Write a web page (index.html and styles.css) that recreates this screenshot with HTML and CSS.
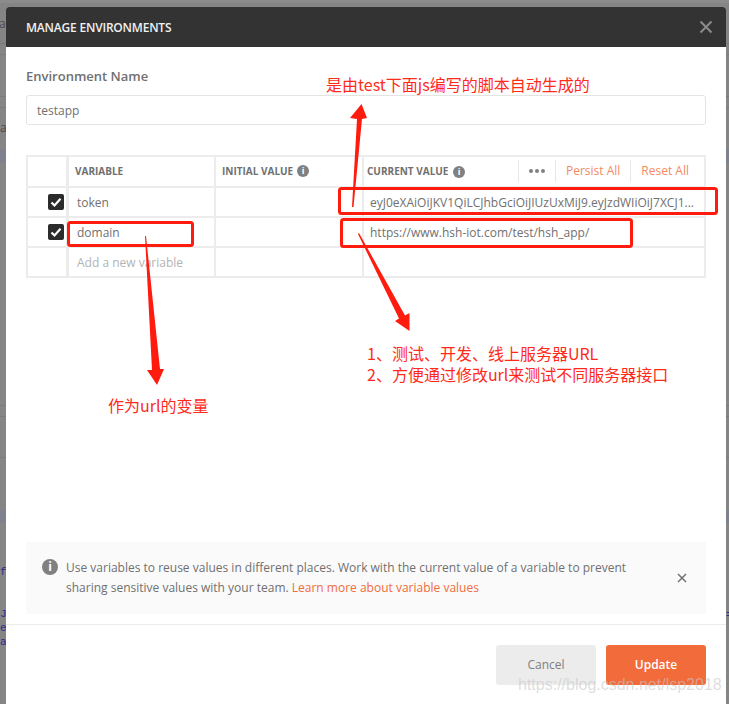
FILE: index.html
```html
<!DOCTYPE html>
<html lang="en">
<head>
  <meta charset="UTF-8">
  <title>Manage Environments</title>
  <link rel="stylesheet" href="styles.css">
</head>
<body>

  <!-- dimmed app behind the dialog -->
  <div class="backdrop">
    <span class="peek peek-as">as</span>
    <span class="peek peek-a">a</span>
    <span class="peek code code-f">f</span>
    <span class="peek code code-j">J</span>
    <span class="peek code code-e">e</span>
    <span class="peek code code-a">a</span>
    <span class="peek code code-eq">=</span>
  </div>

  <div class="modal">
    <div class="modal-header">
      <span class="modal-title">MANAGE ENVIRONMENTS</span>
      <svg class="modal-close" width="14" height="14" viewBox="0 0 14 14">
        <path d="M1.500 1.500L12.500 12.500M12.500 1.500L1.500 12.500" stroke="#8c8c8c" stroke-width="2" fill="none"/>
      </svg>
    </div>

    <div class="modal-body">
      <label class="field-label">Environment Name</label>
      <div class="name-input">testapp</div>

      <div class="var-table">
        <div class="var-row var-head">
          <div class="cell cell-check"></div>
          <div class="cell">VARIABLE</div>
          <div class="cell">INITIAL VALUE <span class="info-dot">i</span></div>
          <div class="cell cell-current">
            <span class="current-label">CURRENT VALUE <span class="info-dot">i</span></span>
            <div class="head-actions">
              <span class="action action-dots"><i></i><i></i><i></i></span>
              <span class="action">Persist All</span>
              <span class="action">Reset All</span>
            </div>
          </div>
        </div>

        <div class="var-row">
          <div class="cell cell-check"><span class="checkbox">
            <svg width="12" height="12" viewBox="0 0 12 12"><path d="M1.500 6.500L4.500 9.500L10.500 2.800" stroke="#fff" stroke-width="2.200" fill="none"/></svg>
          </span></div>
          <div class="cell">token</div>
          <div class="cell"></div>
          <div class="cell cell-value">eyJ0eXAiOiJKV1QiLCJhbGciOiJIUzUxMiJ9.eyJzdWIiOiJ7XCJ1...</div>
        </div>

        <div class="var-row">
          <div class="cell cell-check"><span class="checkbox">
            <svg width="12" height="12" viewBox="0 0 12 12"><path d="M1.500 6.500L4.500 9.500L10.500 2.800" stroke="#fff" stroke-width="2.200" fill="none"/></svg>
          </span></div>
          <div class="cell">domain</div>
          <div class="cell"></div>
          <div class="cell cell-value">https://www.hsh-iot.com/test/hsh_app/</div>
        </div>

        <div class="var-row">
          <div class="cell cell-check"></div>
          <div class="cell cell-placeholder">Add a new variable</div>
          <div class="cell"></div>
          <div class="cell"></div>
        </div>
      </div>

      <div class="notice">
        <span class="info-dot info-dot-big">i</span>
        <p class="notice-text">Use variables to reuse values in different places. Work with the current value of a variable to prevent sharing sensitive values with your team. <a class="notice-link">Learn more about variable values</a></p>
        <svg class="notice-close" width="10" height="10" viewBox="0 0 10 10">
          <path d="M1 1L9 9M9 1L1 9" stroke="#707070" stroke-width="1.500" fill="none"/>
        </svg>
      </div>
    </div>

    <div class="modal-footer">
      <button class="btn btn-cancel">Cancel</button>
      <button class="btn btn-update">Update</button>
    </div>
  </div>

  <!-- red annotations drawn on top of the screenshot -->
  <svg class="markup" width="729" height="704" viewBox="0 0 729 704">
    <g fill="none" stroke="#ff1c0f" stroke-width="3">
      <rect x="339.500" y="188.500" width="377" height="25" rx="2"/>
      <rect x="68.500" y="222.500" width="124" height="23" rx="2"/>
      <rect x="341.500" y="219.500" width="290" height="27" rx="2"/>
    </g>
    <g fill="#ff1c0f">
      <polygon points="352,207 357,119 350,118 361.500,104 367,118 362,119 353.500,207"/>
      <polygon points="145,236 152,370 147,370 157,385 164,369 160,369 146,236"/>
      <polygon points="358,234 399,318.500 395,321 409.500,331 409.500,313 405,315.500 359,233"/>
    </g>
  </svg>
  <span class="note note-top">是由test下面js编写的脚本自动生成的</span>
  <span class="note note-var">作为url的变量</span>
  <div class="note note-url">
    <div>1、测试、开发、线上服务器URL</div>
    <div>2、方便通过修改url来测试不同服务器接口</div>
  </div>

  <span class="watermark">https://blog.csdn.net/lsp2018</span>

</body>
</html>
```

FILE: styles.css
```css
html, body {
  margin: 0;
  height: 704px;
  overflow: hidden;
}

body {
  position: relative;
  font-family: "Open Sans", sans-serif;
  font-size: 12px;
  color: #707070;
  background-color: #858585;
}

/* backdrop */
.backdrop {
  position: absolute;
  top: 0;
  left: 0;
  width: 729px;
  height: 704px;
  background:
    linear-gradient(#8c8c8c, #8c8c8c) 0 0 / 100% 3px no-repeat,
    linear-gradient(#7b7b7b, #7b7b7b) 0 43px / 100% 1px no-repeat,
    linear-gradient(#7b7b7b, #7b7b7b) 0 54px / 100% 1px no-repeat,
    linear-gradient(#7b7b7b, #7b7b7b) 0 96px / 100% 1px no-repeat,
    linear-gradient(#7b7b7b, #7b7b7b) 0 107px / 100% 1px no-repeat,
    linear-gradient(#7d828c, #7d828c) 0 149px / 100% 14px no-repeat,
    linear-gradient(#7b7b7b, #7b7b7b) 0 405px / 100% 1px no-repeat,
    linear-gradient(#7b7b7b, #7b7b7b) 0 416px / 100% 1px no-repeat,
    linear-gradient(#7b7b7b, #7b7b7b) 0 457px / 100% 1px no-repeat,
    linear-gradient(#7d828c, #7d828c) 0 510px / 100% 13px no-repeat;
}

.peek {
  position: absolute;
  left: 0;
  font-size: 12px;
  line-height: 14px;
  color: #4a4a4a;
}

.peek-as { top: 17px; left: -1px; }
.peek-a { top: 121px; }

.code {
  font-family: "Liberation Mono", monospace;
  font-size: 11px;
  color: #2a2a8c;
}

.code-f { top: 565px; }
.code-j { top: 607px; }
.code-e { top: 621px; }
.code-a { top: 635px; }
.code-eq { top: 608px; left: 726px; }

/* dialog */
.modal {
  position: absolute;
  top: 7px;
  left: 6px;
  width: 720px;
  height: 697px;
  display: flex;
  flex-direction: column;
  background-color: #fff;
  border-radius: 3px 3px 0 0;
}

.modal-header {
  height: 40px;
  flex: none;
  display: flex;
  align-items: center;
  justify-content: space-between;
  padding: 0 13px 0 20px;
  background-color: #333;
  border-radius: 3px 3px 0 0;
}

.modal-title {
  font-size: 12px;
  font-weight: 600;
  letter-spacing: -0.2px;
  color: #f0f0f0;
}

.modal-body {
  flex: 1;
  display: flex;
  flex-direction: column;
  padding: 20px 20px 10px;
  border-bottom: 1px solid #ececec;
}

.field-label {
  font-size: 13px;
  font-weight: 600;
  line-height: 18px;
  color: #707070;
}

.name-input {
  height: 28px;
  margin-top: 10px;
  padding-left: 10px;
  line-height: 29px;
  border: 1px solid #e4e4e4;
  border-radius: 3px;
}

/* variables table */
.var-table {
  margin-top: 30px;
  border-top: 2px solid #ececec;
  border-left: 2px solid #ececec;
}

.var-row {
  display: grid;
  grid-template-columns: 41px 147px 148px 342px;
  height: 30px;
}

.var-head {
  height: 31px;
  font-size: 10px;
  font-weight: 700;
  color: #707070;
}

.cell {
  display: flex;
  align-items: center;
  box-sizing: border-box;
  height: 100%;
  min-width: 0;
  padding-left: 8px;
  border-right: 2px solid #ececec;
  border-bottom: 2px solid #ececec;
  white-space: nowrap;
}

.var-head .cell {
  padding-left: 6px;
  padding-bottom: 2px;
}

.var-row .cell-check {
  justify-content: flex-end;
  padding: 0 2px 0 0;
  border-right-width: 3px;
}

.var-head .cell-current {
  padding-left: 3px;
  justify-content: space-between;
}

.cell-value {
  padding-left: 6px;
}

.cell-placeholder {
  color: #b3b3b3;
}

.checkbox {
  width: 16px;
  height: 16px;
  display: flex;
  align-items: center;
  justify-content: center;
  background-color: #2b2b2b;
  border-radius: 2px;
}

.info-dot {
  display: inline-block;
  width: 12px;
  height: 12px;
  margin-left: 4px;
  font-size: 9px;
  font-weight: 700;
  line-height: 12px;
  text-align: center;
  color: #fff;
  background-color: #808080;
  border-radius: 50%;
}

.current-label .info-dot {
  margin-left: 2px;
}

.head-actions {
  display: flex;
  height: 24px;
  align-items: center;
  margin-right: 5px;
}

.action {
  height: 22px;
  padding: 0 10px;
  font-size: 12px;
  font-weight: 400;
  line-height: 22px;
  color: #f58a62;
  border-left: 1px solid #e6e6e6;
}

.action-dots {
  display: flex;
  align-items: center;
  gap: 2px;
}

.action-dots i {
  width: 4px;
  height: 4px;
  background-color: #808080;
  border-radius: 50%;
}

/* info box */
.notice {
  position: relative;
  display: flex;
  height: 72px;
  box-sizing: border-box;
  margin-top: auto;
  padding: 16px 60px 0 16px;
  background-color: #fafafa;
}

.info-dot-big {
  flex: none;
  width: 16px;
  height: 16px;
  margin: 1px 8px 0 0;
  font-size: 12px;
  line-height: 16px;
}

.notice-text {
  margin: 0;
  line-height: 20px;
}

.notice-link {
  color: #f26b3a;
}

.notice-close {
  position: absolute;
  top: 31px;
  right: 19px;
}

/* footer */
.modal-footer {
  flex: none;
  display: flex;
  justify-content: flex-end;
  gap: 10px;
  padding: 20px 20px 19px;
}

.btn {
  width: 100px;
  height: 40px;
  padding: 0 0 2px;
  font-family: "Open Sans", sans-serif;
  font-size: 12px;
  border: none;
  border-radius: 3px;
}

.btn-cancel {
  color: #808080;
  background-color: #ececec;
}

.btn-update {
  font-weight: 600;
  color: #fff;
  background-color: #f26b3a;
}

/* annotations */
.markup {
  position: absolute;
  top: 0;
  left: 0;
}

.note {
  position: absolute;
  font-family: "Noto Sans CJK SC", sans-serif;
  font-size: 16px;
  line-height: 21px;
  color: #ff2a1a;
  white-space: nowrap;
}

.note-top { top: 74px; left: 326px; }
.note-var { top: 395px; left: 108px; }
.note-url { top: 343px; left: 367px; }

.watermark {
  position: absolute;
  top: 675px;
  left: 518px;
  font-family: "Liberation Sans", sans-serif;
  font-size: 16px;
  line-height: 20px;
  color: rgba(200, 200, 200, 0.6);
  white-space: nowrap;
}
```
